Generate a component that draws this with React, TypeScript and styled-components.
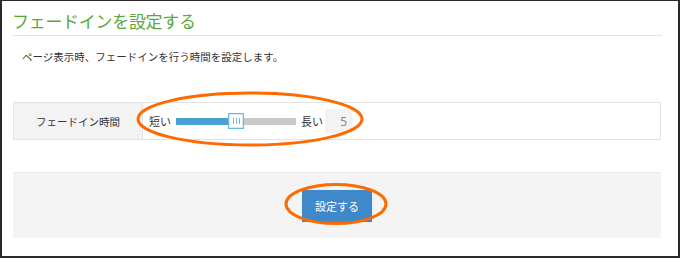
import React from "react";
import styled, { createGlobalStyle } from "styled-components";

const Global = createGlobalStyle`
  html, body { margin: 0; padding: 0; background: #fff; }
  body { font-family: "Noto Sans CJK JP", "Noto Sans", sans-serif; }
  * { box-sizing: border-box; }
`;

const Frame = styled.div`
  position: relative;
  width: 680px;
  height: 258px;
  border: 2px solid #2a2a2a;
  border-top-width: 1px;
  padding: 0 16px 0 10px;
  background: #fff;
`;

const Header = styled.h1`
  margin: 0;
  padding: 8px 0 2px 0;
  border-bottom: 1px solid #dfe9d3;
  font-size: 17px;
  line-height: 24px;
  font-weight: 400;
  color: #5aa83a;
  letter-spacing: -0.3px;
`;

const Description = styled.p`
  margin: 13px 0 0 0;
  padding-left: 10px;
  font-size: 10.5px;
  line-height: 16px;
  color: #333;
`;

const SettingTable = styled.div`
  display: grid;
  grid-template-columns: 129px 1fr;
  margin: 37px 0 0 1px;
  width: 648px;
  height: 38px;
  border: 1px solid #e3e3e3;
`;

const LabelCell = styled.div`
  display: flex;
  align-items: center;
  justify-content: center;
  background: #f3f3f3;
  border-right: 1px solid #e3e3e3;
  font-size: 10.5px;
  color: #333;
`;

const ValueCell = styled.div`
  display: flex;
  align-items: center;
  padding-left: 6px;
  font-size: 11px;
  color: #333;
`;

const RangeText = styled.span<{ $gap: number }>`
  margin-right: ${(p) => p.$gap}px;
`;

const Track = styled.div`
  position: relative;
  width: 120px;
  height: 7px;
  background: #c9c9c9;
  margin-right: 5px;
`;

const Fill = styled.div`
  height: 100%;
  background: #4aa2d0;
`;

const Handle = styled.div`
  position: absolute;
  top: 50%;
  width: 16px;
  height: 16px;
  margin-left: -8px;
  transform: translateY(-50%);
  background: #fff;
  border: 1px solid #6fb4e0;
  box-shadow: inset 0 0 0 1px #d6ebf8;
  display: flex;
  align-items: center;
  justify-content: center;
  gap: 2px;
`;

const Grip = styled.span`
  width: 1px;
  height: 6px;
  background: #7cb3d8;
`;

const ValueBox = styled.div`
  width: 27px;
  height: 24px;
  background: #f3f3f3;
  display: flex;
  align-items: center;
  justify-content: flex-end;
  padding-right: 5px;
  font-family: "Noto Sans", sans-serif;
  font-size: 12px;
  color: #888;
`;

const ActionPanel = styled.div`
  display: flex;
  align-items: center;
  justify-content: center;
  margin: 32px 0 0 1px;
  width: 648px;
  height: 66px;
  background: #f4f4f4;
  border-top: 1px solid #e8e8e8;
`;

const SubmitButton = styled.button`
  width: 72px;
  height: 34px;
  border: 1px solid #e8f0f8;
  background: #3f88c9;
  color: #fff;
  font-family: "Noto Sans CJK JP", sans-serif;
  font-size: 11px;
  padding: 0;
  cursor: pointer;
`;

const Annotations = styled.svg`
  position: absolute;
  left: -2px;
  top: -1px;
  width: 680px;
  height: 258px;
  pointer-events: none;
`;

export default function App() {
  const value = 5;
  const pct = 50;
  return (
    <>
      <Global />
      <Frame>
        <Header>フェードインを設定する</Header>
        <Description>ページ表示時、フェードインを行う時間を設定します。</Description>
        <SettingTable>
          <LabelCell>フェードイン時間</LabelCell>
          <ValueCell>
            <RangeText $gap={5}>短い</RangeText>
            <Track>
              <Fill style={{ width: `${pct}%` }} />
              <Handle style={{ left: `${pct}%` }}>
                <Grip />
                <Grip />
                <Grip />
              </Handle>
            </Track>
            <RangeText $gap={2}>長い</RangeText>
            <ValueBox>{value}</ValueBox>
          </ValueCell>
        </SettingTable>
        <ActionPanel>
          <SubmitButton>設定する</SubmitButton>
        </ActionPanel>
        <Annotations viewBox="0 0 680 258">
          <ellipse cx="250" cy="119" rx="112" ry="26" fill="none" stroke="#ff6a00" strokeWidth="3" />
          <ellipse cx="336" cy="204" rx="50" ry="19.5" fill="none" stroke="#ff6a00" strokeWidth="3" />
        </Annotations>
      </Frame>
    </>
  );
}
